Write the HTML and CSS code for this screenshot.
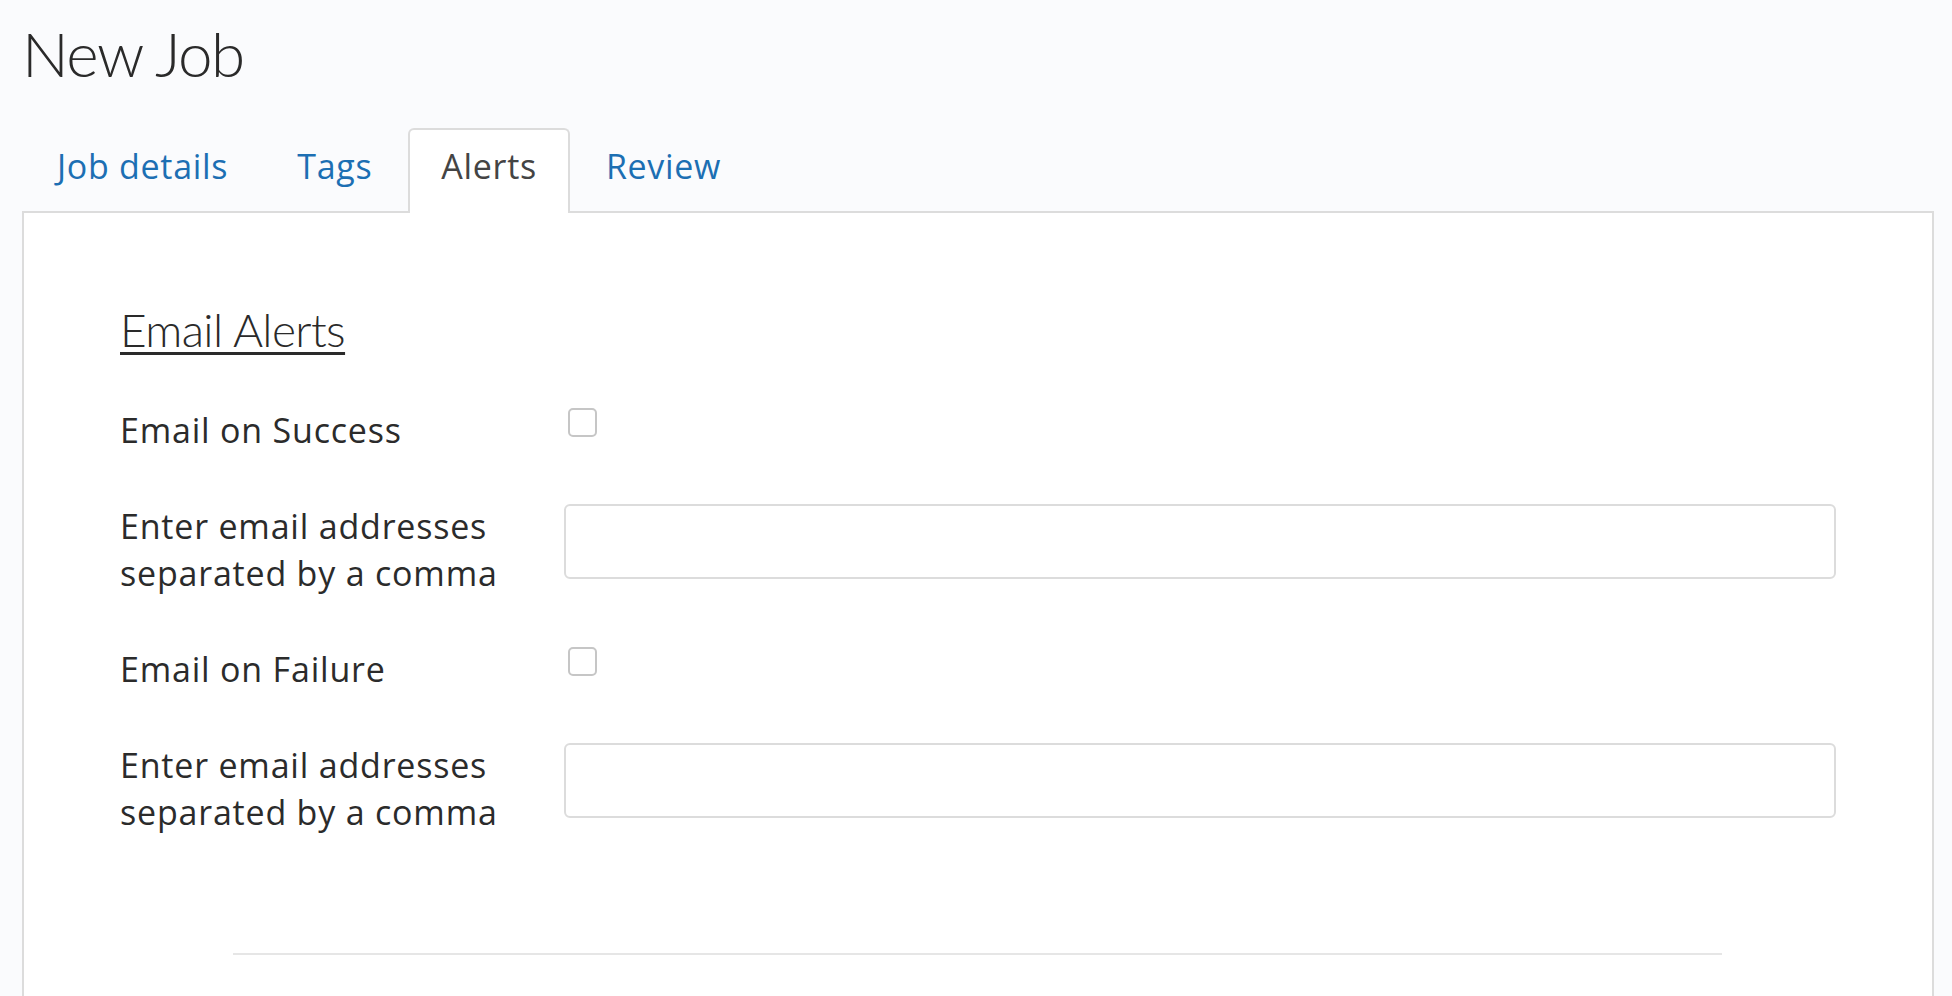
FILE: index.html
```html
<!DOCTYPE html>
<html lang="en">
<head>
    <meta charset="UTF-8">
    <meta name="viewport" content="width=device-width, initial-scale=1.0">
    <title>New Job</title>
    <link rel="stylesheet" href="styles.css">
</head>
<body>
    <div class="page">
        <h1 class="page-title">New Job</h1>

        <ul class="nav-tabs">
            <li><a href="#details">Job details</a></li>
            <li><a href="#tags">Tags</a></li>
            <li class="active"><a href="#alerts">Alerts</a></li>
            <li><a href="#review">Review</a></li>
        </ul>

        <div class="tab-panel" id="alerts">
            <h2 class="section-title">Email Alerts</h2>

            <div class="form-row">
                <label class="form-label" for="successAlert">Email on Success</label>
                <div class="form-field">
                    <input type="checkbox" id="successAlert" name="successAlert" class="check">
                </div>
            </div>

            <div class="form-row">
                <label class="form-label" for="successEmails">Enter email addresses separated by a comma</label>
                <div class="form-field">
                    <input type="text" id="successEmails" name="successEmails" class="text-input">
                </div>
            </div>

            <div class="form-row">
                <label class="form-label" for="failureAlert">Email on Failure</label>
                <div class="form-field">
                    <input type="checkbox" id="failureAlert" name="failureAlert" class="check">
                </div>
            </div>

            <div class="form-row">
                <label class="form-label" for="failureEmails">Enter email addresses separated by a comma</label>
                <div class="form-field">
                    <input type="text" id="failureEmails" name="failureEmails" class="text-input">
                </div>
            </div>

            <hr class="divider">
        </div>
    </div>
</body>
</html>
```

FILE: styles.css
```css
body {
    font-family: "Open Sans", Arial, sans-serif;
    background-color: #fafbfd;
    color: #2b2b2b;
    margin: 0;
    padding: 0;
    overflow: hidden;
}
.page {
    margin: 0 18px 0 22px;
}
.page-title {
    font-family: Lato, "Open Sans", sans-serif;
    font-weight: 300;
    font-size: 62px;
    letter-spacing: -1.5px;
    line-height: 76px;
    color: #2a2a2a;
    margin: 15px 0 37px 0;
}

/* tabs */
.nav-tabs {
    list-style: none;
    display: flex;
    margin: 0;
    padding: 0 0 0 2px;
}
.nav-tabs li {
    margin-right: 3px;
    margin-bottom: -2px;
}
.nav-tabs a {
    display: block;
    padding: 11px 31px 21px;
    font-size: 34px;
    letter-spacing: 0.7px;
    line-height: 51px;
    color: #1c6fb3;
    text-decoration: none;
    border: 2px solid transparent;
    border-bottom: none;
    border-radius: 6px 6px 0 0;
}
.nav-tabs .active a {
    color: #444;
    background: #fff;
    border-color: #dcdcdc;
}

/* panel */
.tab-panel {
    background: #fff;
    border: 2px solid #dcdcdc;
    border-bottom: none;
    padding: 88px 96px 60px;
}
.section-title {
    font-family: Lato, "Open Sans", sans-serif;
    font-weight: 300;
    font-size: 46px;
    letter-spacing: -0.6px;
    line-height: 58px;
    color: #2a2a2a;
    margin: 0 0 48px 0;
    text-decoration: underline;
    text-decoration-thickness: 3px;
    text-underline-offset: 5px;
}
.form-row {
    display: flex;
    align-items: flex-start;
    margin-bottom: 49px;
}
.form-label {
    width: 444px;
    flex-shrink: 0;
    padding-right: 30px;
    box-sizing: border-box;
    font-size: 34px;
    letter-spacing: 0.8px;
    line-height: 47px;
}
.form-field {
    flex: 1;
}
.check {
    appearance: none;
    -webkit-appearance: none;
    display: block;
    width: 29px;
    height: 29px;
    margin: 1px 0 0 4px;
    border: 2px solid #c6c6c6;
    border-radius: 5px;
    background: #fff;
    box-sizing: border-box;
}
.text-input {
    display: block;
    width: 100%;
    height: 75px;
    margin: 1px 0 0 0;
    border: 2px solid #dcdcdc;
    border-radius: 6px;
    box-sizing: border-box;
    font-size: 30px;
    padding: 0 16px;
}
.divider {
    border: none;
    border-top: 2px solid #e6e6e6;
    margin: 117px 114px 0 113px;
}
```
